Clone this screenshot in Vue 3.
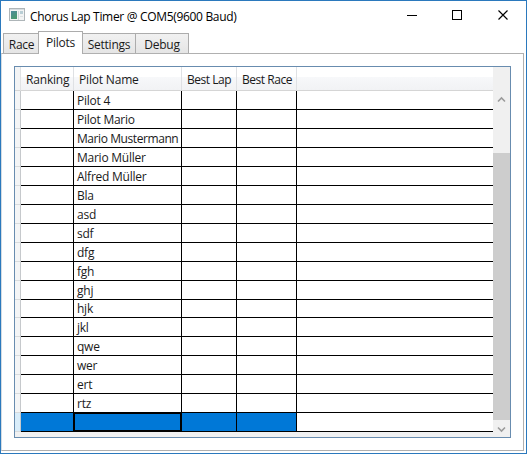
<script setup>
const tabs = [
  { label: 'Race', id: 'race' },
  { label: 'Pilots', id: 'pilots', active: true },
  { label: 'Settings', id: 'settings' },
  { label: 'Debug', id: 'debug' },
]
const columns = ['Ranking', 'Pilot Name', 'Best Lap', 'Best Race']
const pilots = [
  'Pilot 4', 'Pilot Mario', 'Mario Mustermann', 'Mario Müller', 'Alfred Müller', 'Bla',
  'asd', 'sdf', 'dfg', 'fgh', 'ghj', 'hjk', 'jkl', 'qwe', 'wer', 'ert', 'rtz', '',
]
</script>

<template>
  <div class="window">
    <header class="titlebar">
      <svg class="app-icon" width="16" height="14" viewBox="0 0 16 14">
        <defs>
          <linearGradient id="pane" x1="0" y1="0" x2="0.5" y2="1">
            <stop offset="0" stop-color="#4f8b9c" />
            <stop offset="1" stop-color="#4c9a70" />
          </linearGradient>
        </defs>
        <rect x="0.5" y="0.5" width="15" height="12" fill="#f3f4f4" stroke="#aeb5b8" />
        <path d="M1 1.5H15" stroke="#d7dde1" />
        <rect x="2" y="3" width="6" height="8" fill="url(#pane)" />
        <path d="M9.500 3V12" stroke="#d0d6d8" />
        <rect x="11" y="3" width="3" height="3" fill="#b9ced5" />
        <path d="M11 8.500H14" stroke="#dce0e1" />
      </svg>
      <h1 class="title">Chorus Lap Timer @ COM5(9600 Baud)</h1>
      <svg class="controls" width="102" height="12" viewBox="0 0 102 12" fill="none" stroke="#000">
        <path d="M0 5.500H10" />
        <rect x="45.500" y="0.500" width="9" height="9" />
        <path d="M91.500 0.500L100.500 9.500M100.500 0.500L91.500 9.500" stroke-width="1.150" />
      </svg>
    </header>

    <nav class="tabs">
      <div v-for="t in tabs" :key="t.id" class="tab" :class="[t.id, { active: t.active }]">{{ t.label }}</div>
    </nav>

    <main class="page">
      <div class="grid">
        <div class="table">
          <div class="row head">
            <div class="gutter"></div>
            <div v-for="(c, i) in columns" :key="c" class="cell" :class="{ best: i > 1 }">{{ c }}</div>
            <div class="rest"></div>
          </div>
          <div
            v-for="(p, i) in pilots"
            :key="i"
            class="row"
            :class="{ short: i === 11, selected: i === 17 }"
          >
            <div class="gutter"></div>
            <div class="cell"></div>
            <div class="cell name" :class="{ wide: i === 2 }">{{ p }}</div>
            <div class="cell"></div>
            <div class="cell"></div>
            <div class="rest"></div>
          </div>
          <div class="foot"></div>
        </div>
        <div class="scrollbar">
          <svg class="up" width="9" height="7" viewBox="0 0 9 7"><path d="M1 5.500L4.500 2L8 5.500" /></svg>
          <div class="thumb"></div>
          <svg class="down" width="9" height="7" viewBox="0 0 9 7"><path d="M1 1.500L4.500 5L8 1.500" /></svg>
        </div>
      </div>
    </main>
  </div>
</template>

<style>
body { background: #fff; overflow: hidden; }
</style>

<style scoped>
* { box-sizing: border-box; }
.window {
  width: 527px;
  height: 454px;
  border: 1px solid #2b79bd;
  background: #fff;
  display: flex;
  flex-direction: column;
  font: 12px/16px "Open Sans", "Noto Sans", sans-serif;
  color: #1a1a1a;
  white-space: nowrap;
}
.titlebar {
  height: 30px;
  padding-left: 8px;
  display: flex;
  align-items: flex-start;
}
.app-icon { margin-top: 7px; }
.title {
  margin: 8px 0 0 5px;
  width: 377px;
  font-size: 12px;
  font-weight: 400;
  line-height: 16px;
  letter-spacing: -0.32px;
  color: #000;
}
.controls { margin-top: 9px; }
.tabs {
  height: 22px;
  padding-left: 2px;
  display: flex;
  align-items: flex-end;
}
.tab {
  height: 20px;
  padding-top: 3px;
  border: 1px solid #acacac;
  border-width: 1px 1px 0 0;
  background: linear-gradient(#f1f1f1, #e5e5e5);
  text-align: center;
  letter-spacing: -0.25px;
}
.race { width: 35px; padding-left: 1px; border-left-width: 1px; border-right: 0; }
.pilots { width: 45px; }
.settings { width: 53px; }
.debug { width: 53px; }
.tab.active {
  height: 23px;
  margin-bottom: -1px;
  padding-top: 3px;
  border-left-width: 1px;
  background: #fff;
  position: relative;
}
.page {
  width: 523px;
  height: 398px;
  border: 1px solid #b0b0b0;
  border-left-color: #d5dce2;
  padding: 12px 0 0 12px;
}
.grid {
  width: 497px;
  height: 372px;
  border: 1px solid #688caf;
  background: #f0f0f0;
  display: flex;
}
.table { width: 478px; }
.row {
  height: 19px;
  display: grid;
  grid-template-columns: 6px 53px 108px 55px 60px 196px;
}
.row.short { height: 18px; }
.row > div { border-bottom: 1px solid #000; }
.row > .gutter {
  background: #f4f5f6;
  border-right: 1px solid #c6c9cc;
  border-bottom-color: #d8dbdd;
}
.cell {
  background: #fff;
  border-right: 1px solid #000;
  line-height: 16px;
  padding: 2px 0 0 3px;
}
.row.short > .cell { padding-top: 1px; }
.rest { background: #fff; }
.name { letter-spacing: -0.25px; }
.name.wide { letter-spacing: -0.42px; }
.row.head {
  height: 24px;
  background: linear-gradient(#fff 0, #fff 40%, #f7f8fa 41%, #f1f2f4 100%);
}
.row.head > div { background: none; border-bottom-color: #d5d5d5; }
.row.head > .cell {
  border-right-color: #dfe1e4;
  padding: 5px 0 0 5px;
  letter-spacing: -0.18px;
}
.row.head > .cell.best { letter-spacing: -0.46px; }
.row.head > .gutter { border-right-color: #e0e2e4; background: #f3f4f5; }
.selected > .cell { background: #0078d7; }
.selected > .gutter { background: #d9edfa; }
.selected > .cell.name { box-shadow: inset 1px 1px #000, inset -1px -1px #000; }
.foot { height: 5px; background: #f0f1f2; }
.scrollbar {
  width: 17px;
  background: #f0f0f0;
  display: flex;
  flex-direction: column;
  align-items: center;
}
.scrollbar path { fill: none; stroke: #9b9b9b; stroke-width: 1.600; }
.up { margin-top: 29px; flex: none; }
.thumb { width: 17px; height: 267px; margin-top: 50px; background: #cdcdcd; flex: none; }
.down { margin-top: 6px; flex: none; }
</style>
